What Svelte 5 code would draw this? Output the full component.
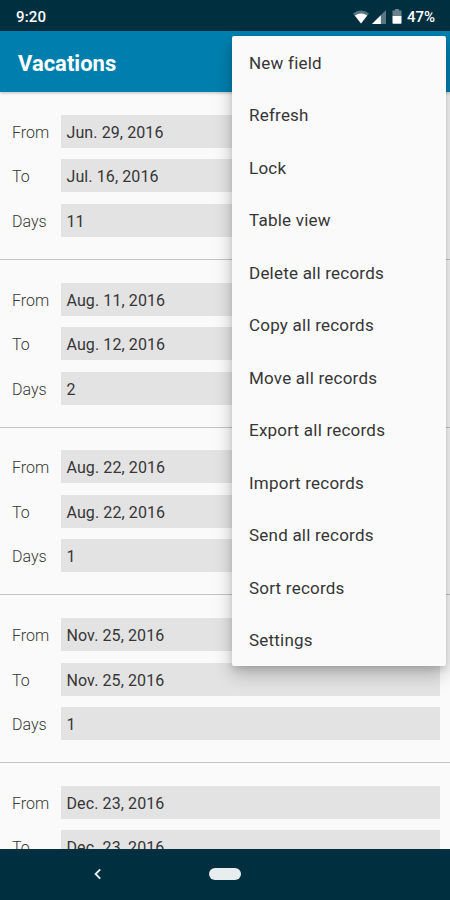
<script lang="ts">
	type VacationRecord = { from: string; to: string; days?: number };

	const records: VacationRecord[] = [
		{ from: 'Jun. 29, 2016', to: 'Jul. 16, 2016', days: 11 },
		{ from: 'Aug. 11, 2016', to: 'Aug. 12, 2016', days: 2 },
		{ from: 'Aug. 22, 2016', to: 'Aug. 22, 2016', days: 1 },
		{ from: 'Nov. 25, 2016', to: 'Nov. 25, 2016', days: 1 },
		{ from: 'Dec. 23, 2016', to: 'Dec. 23, 2016' }
	];

	const menuItems = [
		'New field',
		'Refresh',
		'Lock',
		'Table view',
		'Delete all records',
		'Copy all records',
		'Move all records',
		'Export all records',
		'Import records',
		'Send all records',
		'Sort records',
		'Settings'
	];
</script>

{#snippet field(label: string, value: string | number)}
	<div class="field">
		<span class="label">{label}</span>
		<span class="value">{value}</span>
	</div>
{/snippet}

<div class="screen">
	<div class="status-bar">
		<span class="time">9:20</span>
		<div class="status-icons">
			<svg class="wifi" width="16" height="14" viewBox="0 0 16 14">
				<path d="M0 3.4Q8-2.4 16 3.4L8 13.4Z" fill="#fff" opacity="0.35" />
				<path d="M1.8 5.6Q8 1.6 14.2 5.6L8 13.4Z" fill="#fff" />
			</svg>
			<svg class="signal" width="14" height="14" viewBox="0 0 14 14">
				<path d="M14 0V14H0Z" fill="#fff" opacity="0.35" />
				<path d="M8.8 5.2V14H0Z" fill="#fff" />
			</svg>
			<svg class="battery" width="10" height="15" viewBox="0 0 10 15">
				<path d="M3 0h4v1.5h2.5V7h-9V1.5H3Z" fill="#fff" opacity="0.4" />
				<path d="M.5 7h9v7a.8.8 0 0 1-.8.8H1.3A.8.8 0 0 1 .5 14Z" fill="#fff" />
			</svg>
			<span class="percent">47%</span>
		</div>
	</div>

	<header class="app-bar">
		<h1>Vacations</h1>
	</header>

	<main class="records">
		{#each records as record}
			<section class="record">
				{@render field('From', record.from)}
				{@render field('To', record.to)}
				{#if record.days !== undefined}
					{@render field('Days', record.days)}
				{/if}
			</section>
		{/each}
	</main>

	<nav class="nav-bar">
		<button class="back" aria-label="Back">
			<svg width="7" height="12" viewBox="0 0 7 12">
				<path d="M6.2 1.3 1.6 6l4.6 4.7" fill="none" stroke="#e8edf0" stroke-width="1.9" />
			</svg>
		</button>
		<button class="home" aria-label="Home"></button>
	</nav>

	<div class="menu" role="menu">
		{#each menuItems as item}
			<button class="menu-item" role="menuitem">{item}</button>
		{/each}
	</div>
</div>

<style>
	:global(body) {
		margin: 0;
	}

	.screen {
		position: relative;
		display: flex;
		flex-direction: column;
		width: 450px;
		height: 900px;
		overflow: hidden;
		background: #fafafa;
		color: #363636;
		font-family: Roboto, sans-serif;
		font-size: 16px;
	}

	button {
		padding: 0;
		border: 0;
		background: none;
		color: inherit;
		font: inherit;
	}

	.status-bar {
		display: flex;
		flex: none;
		align-items: center;
		justify-content: space-between;
		box-sizing: border-box;
		height: 31px;
		padding: 2px 15px 0 16px;
		background: #002f40;
		color: #fff;
		font-size: 15px;
		font-weight: 500;
	}

	.time {
		letter-spacing: 0.15px;
	}

	.status-icons {
		display: flex;
		align-items: center;
	}

	.wifi {
		margin-right: 3px;
	}

	.battery {
		margin: 0 5px 0 6px;
	}

	.app-bar {
		display: flex;
		flex: none;
		align-items: center;
		height: 61px;
		padding: 3px 18px 0;
		box-sizing: border-box;
		background: #007fae;
		box-shadow: 0 1px 3px rgba(0, 0, 0, 0.25);
	}

	h1 {
		margin: 0;
		color: #fff;
		font-size: 22px;
		font-weight: 700;
	}

	.records {
		flex: 1;
		min-height: 0;
		overflow: hidden;
	}

	.record {
		display: flex;
		flex-direction: column;
		gap: 11.5px;
		padding: 22.8px 10px 22px 12px;
		border-bottom: 1px solid #c4c4c4;
	}

	.field {
		display: flex;
		height: 33px;
		line-height: 35px;
	}

	.label {
		width: 49px;
		font-weight: 300;
	}

	.value {
		flex: 1;
		padding-left: 5.5px;
		background: #e3e3e3;
		letter-spacing: 0.1px;
	}

	.nav-bar {
		display: grid;
		flex: none;
		grid-template-columns: 195px 60px 1fr;
		place-items: center;
		box-sizing: border-box;
		height: 51px;
		padding-bottom: 1px;
		background: #002f40;
	}

	.back svg {
		display: block;
	}

	.home {
		width: 32px;
		height: 12px;
		border-radius: 6px;
		background: #e8edf0;
	}

	.menu {
		position: absolute;
		top: 35.5px;
		right: 4px;
		display: flex;
		flex-direction: column;
		width: 214px;
		border-radius: 2px;
		background: #fafafa;
		box-shadow:
			0 8px 18px rgba(0, 0, 0, 0.24),
			0 3px 6px rgba(0, 0, 0, 0.1);
	}

	.menu-item {
		height: 52.5px;
		padding: 2px 17px 0;
		font-size: 17px;
		letter-spacing: 0.22px;
		text-align: left;
	}
</style>
